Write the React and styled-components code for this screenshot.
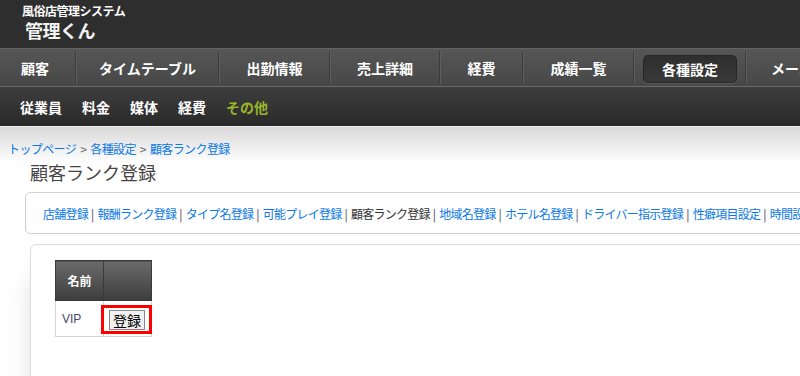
import React from "react";
import styled, { createGlobalStyle } from "styled-components";

const GlobalStyle = createGlobalStyle`
  html, body {
    margin: 0;
    padding: 0;
    background: #fff;
    overflow: hidden;
  }
  body {
    font-family: "Noto Sans CJK JP", "Noto Sans", sans-serif;
  }
`;

const mainMenu = [
  { label: "顧客", w: 76, pad: 20 },
  { label: "タイムテーブル", w: 143 },
  { label: "出勤情報", w: 111 },
  { label: "売上詳細", w: 110 },
  { label: "経費", w: 83 },
  { label: "成績一覧", w: 111 },
  { label: "各種設定", w: 112, active: true },
  { label: "メール設定", w: 120 },
];

const subMenu = ["従業員", "料金", "媒体", "経費"];

const tabs = [
  "店舗登録",
  "報酬ランク登録",
  "タイプ名登録",
  "可能プレイ登録",
  "顧客ランク登録",
  "地域名登録",
  "ホテル名登録",
  "ドライバー指示登録",
  "性癖項目設定",
  "時間設定",
];

function App() {
  return (
    <Page>
      <GlobalStyle />
      <Header>
        <Brand>
          <BrandSub>風俗店管理システム</BrandSub>
          <BrandName>管理くん</BrandName>
        </Brand>
      </Header>

      <MainNav>
        {mainMenu.map((m, i) => (
          <NavItem key={m.label} $w={m.w} $pad={m.pad} $first={i === 0}>
            {m.active ? <ActiveTab>{m.label}</ActiveTab> : m.label}
          </NavItem>
        ))}
      </MainNav>

      <SubNav>
        {subMenu.map((s) => (
          <SubItem key={s}>{s}</SubItem>
        ))}
        <SubItem $current>その他</SubItem>
      </SubNav>

      <Body>
        <Breadcrumb>
          <a>トップページ</a>
          <Arrow>&gt;</Arrow>
          <a>各種設定</a>
          <Arrow>&gt;</Arrow>
          <a>顧客ランク登録</a>
        </Breadcrumb>
        <Title>顧客ランク登録</Title>

        <TabBox>
          {tabs.map((t, i) => (
            <React.Fragment key={t}>
              {i > 0 && <Pipe>|</Pipe>}
              {t === "顧客ランク登録" ? <CurrentTab>{t}</CurrentTab> : <TabLink>{t}</TabLink>}
            </React.Fragment>
          ))}
        </TabBox>

        <ContentBox>
          <RankTable>
            <thead>
              <tr>
                <Th>名前</Th>
                <Th />
              </tr>
            </thead>
            <tbody>
              <tr>
                <Td>VIP</Td>
                <Td $action>
                  <Highlight>
                    <RegisterButton>登録</RegisterButton>
                  </Highlight>
                </Td>
              </tr>
            </tbody>
          </RankTable>
        </ContentBox>
      </Body>
    </Page>
  );
}

const Page = styled.div`
  width: 800px;
  height: 376px;
  overflow: hidden;
`;

const Header = styled.div`
  height: 48px;
  background-color: #2d2d2d;
  background-image: repeating-linear-gradient(45deg, rgba(255,255,255,0.015) 0 1px, transparent 1px 3px);
`;

const Brand = styled.div`
  padding: 3px 0 0 22px;
  color: #fff;
  display: flex;
  flex-direction: column;
`;

const BrandSub = styled.div`
  font-size: 12px;
  font-weight: bold;
  line-height: 16px;
  letter-spacing: -0.5px;
`;

const BrandName = styled.div`
  font-size: 18px;
  font-weight: bold;
  line-height: 22px;
  padding-left: 3px;
  letter-spacing: -0.5px;
  color: #f4f4f4;
`;

const MainNav = styled.div`
  display: flex;
  height: 37px;
  border-top: 1px solid #636363;
  background: linear-gradient(#565656, #474747);
  white-space: nowrap;
`;

const NavItem = styled.div`
  flex: none;
  width: ${(p) => p.$w}px;
  box-sizing: border-box;
  display: flex;
  align-items: center;
  justify-content: ${(p) => (p.$pad ? "flex-start" : "center")};
  padding-left: ${(p) => p.$pad || 0}px;
  color: #fff;
  font-size: 14px;
  font-weight: bold;
  margin: 2px 0;
  border-left: 1px solid ${(p) => (p.$first ? "transparent" : "#5e5e5e")};
  border-right: 1px solid #3c3c3c;
`;

const ActiveTab = styled.div`
  width: 94px;
  height: 28px;
  margin-top: 3px;
  box-sizing: border-box;
  display: flex;
  align-items: center;
  justify-content: center;
  border: 1px solid #262626;
  border-radius: 5px;
  background: linear-gradient(#2e2e2e, #3a3a3a);
  box-shadow: 0 1px 0 #5a5a5a;
`;

const SubNav = styled.div`
  display: flex;
  align-items: center;
  gap: 20px;
  height: 39px;
  padding-left: 20px;
  border-top: 1px solid #6a6a6a;
  border-bottom: 1px solid #f2f2f2;
  background: linear-gradient(#3d3d3d, #2a2a2a);
`;

const SubItem = styled.div`
  color: ${(p) => (p.$current ? "#98b52c" : "#fff")};
  font-size: 14px;
  font-weight: bold;
`;

const Body = styled.div`
  background: linear-gradient(#d9d9d9, #fff 36px);
  padding-top: 14px;
  height: 300px;
`;

const Breadcrumb = styled.div`
  padding-left: 8px;
  font-size: 12px;
  line-height: 16px;
  color: #0a78e6;
  letter-spacing: -0.6px;
  a {
    color: #0a78e6;
  }
`;

const Arrow = styled.span`
  color: #666;
  margin: 0 4px;
`;

const Title = styled.h1`
  margin: 2px 0 0 30px;
  font-size: 18px;
  font-weight: normal;
  line-height: 26px;
  color: #444;
`;

const TabBox = styled.div`
  margin: 7px 0 0 25px;
  width: 900px;
  height: 42px;
  box-sizing: border-box;
  padding: 0 0 0 17px;
  display: flex;
  align-items: center;
  border: 1px solid #d2d2d2;
  border-radius: 5px;
  font-size: 12px;
  letter-spacing: -0.75px;
  white-space: nowrap;
`;

const TabLink = styled.a`
  color: #0a78e6;
`;

const CurrentTab = styled.span`
  color: #333;
`;

const Pipe = styled.span`
  color: #4a3a5a;
  margin: 0 4px 0 3px;
`;

const ContentBox = styled.div`
  margin: 10px 0 0 30px;
  width: 900px;
  height: 200px;
  box-sizing: border-box;
  padding: 15px 0 0 24px;
  border: 1px solid #dcdcdc;
  border-radius: 6px;
  background: #fff;
  box-shadow: -8px 24px 24px -10px rgba(0, 0, 0, 0.14);
`;

const RankTable = styled.table`
  border-collapse: collapse;
  table-layout: fixed;
  width: 96px;
`;

const Th = styled.th`
  width: 48px;
  height: 40px;
  padding: 0;
  box-sizing: border-box;
  border: 1px solid #3a3a3a;
  background: linear-gradient(#6a6a6a, #3d3d3d);
  color: #fff;
  font-size: 12px;
  font-weight: bold;
`;

const Td = styled.td`
  height: 36px;
  padding: 0 ${(p) => (p.$action ? 0 : 6)}px;
  box-sizing: border-box;
  border: 1px solid #d4d4d4;
  white-space: nowrap;
  font-family: "Liberation Sans", Arial, sans-serif;
  font-size: 12px;
  color: #424a6a;
`;

const Highlight = styled.span`
  display: inline-flex;
  padding: 2px 4px 1px 5px;
  margin: 1px -4px 0 -3px;
  border: 3px solid #ff0000;
`;

const RegisterButton = styled.button`
  font-family: "Noto Sans CJK JP", sans-serif;
  font-size: 14px;
  line-height: 18px;
  padding: 0 3px;
  white-space: nowrap;
  color: #000;
  background: #f0f0f0;
  border: 1px solid #8a8a8a;
  border-radius: 0;
`;

export default App;
